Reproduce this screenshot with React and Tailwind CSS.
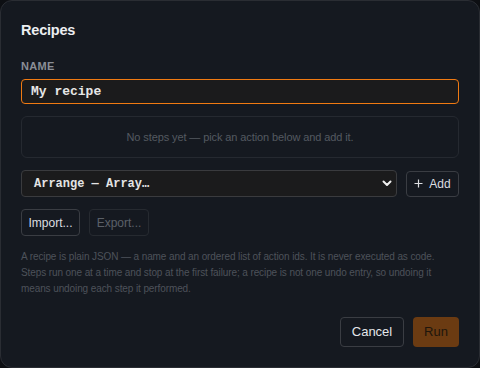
import React from "react";

export default function App() {
  return (
    <div className="w-[480px] h-[368px] bg-[#0d0f13]" style={{ fontFamily: "'Liberation Sans', Arial, sans-serif" }}>
      <div className="w-[480px] h-[368px] rounded-[12px] border border-[#2a2d33] bg-[#151920] px-[20px] pt-[19px] flex flex-col">
        <h2 className="text-[14.5px] leading-[20px] font-bold text-[#eceef1] tracking-[-0.2px]">Recipes</h2>
        <div className="mt-[18px] text-[11px] leading-[16px] font-bold tracking-[0.3px] text-[#8a8e96]">NAME</div>
        <div className="mt-[5px] h-[25px] rounded-[4px] border border-[#f07a12] bg-[#1b1b1c] flex items-center px-[9px]">
          <span className="text-[13px] font-bold text-[#e6e6e6]" style={{ fontFamily: "'Liberation Mono', monospace" }}>My recipe</span>
        </div>
        <div className="mt-[12px] h-[42px] rounded-[6px] border border-[#252930] flex items-center justify-center text-[11px] text-[#545961] tracking-[-0.1px]">
          No steps yet — pick an action below and add it.
        </div>
        <div className="mt-[12px] flex gap-[9px] items-center">
          <div className="flex-1 h-[27px] rounded-[4px] border border-[#3a3b3e] bg-[#1b1b1c] flex items-center justify-between pl-[12px] pr-[4px]">
            <span className="text-[12px] font-bold text-[#e4e4e4]" style={{ fontFamily: "'Liberation Mono', monospace" }}>Arrange — Array…</span>
            <svg width="10" height="7" viewBox="0 0 10 7"><path d="M1.5 1.5 L5 5 L8.5 1.5" stroke="#f0f0f0" strokeWidth="2" fill="none" strokeLinecap="round" strokeLinejoin="round" /></svg>
          </div>
          <button className="h-[26px] w-[53px] rounded-[4px] border border-[#3a3d43] bg-[#151920] flex items-center justify-center gap-[6px] text-[12px] text-[#dcdee2]">
            <svg width="9" height="9" viewBox="0 0 9 9"><path d="M4.5 0.5 V8.5 M0.5 4.5 H8.5" stroke="#dcdee2" strokeWidth="1.2" /></svg>
            <span>Add</span>
          </button>
        </div>
        <div className="mt-[12px] flex gap-[9px]">
          <button className="h-[27px] w-[59px] rounded-[4px] border border-[#3a3d43] text-[12px] text-[#dcdee2]">Import...</button>
          <button className="h-[27px] w-[60px] rounded-[4px] border border-[#262a30] text-[12px] text-[#5b6068]">Export...</button>
        </div>
        <p className="mt-[13px] text-[10px] leading-[16px] text-[#4d525a] whitespace-nowrap tracking-[-0.1px]">
          A recipe is plain JSON — a name and an ordered list of action ids. It is never executed as code.<br />
          Steps run one at a time and stop at the first failure; a recipe is not one undo entry, so undoing it<br />
          means undoing each step it performed.
        </p>
        <div className="mt-[20px] flex justify-end gap-[9px]">
          <button className="h-[30px] w-[64px] rounded-[4px] border border-[#3a3d43] text-[13px] text-[#e4e6ea]">Cancel</button>
          <button className="h-[30px] w-[46px] rounded-[4px] bg-[#6b3b12] text-[13px] text-[#20160c]">Run</button>
        </div>
      </div>
    </div>
  );
}
